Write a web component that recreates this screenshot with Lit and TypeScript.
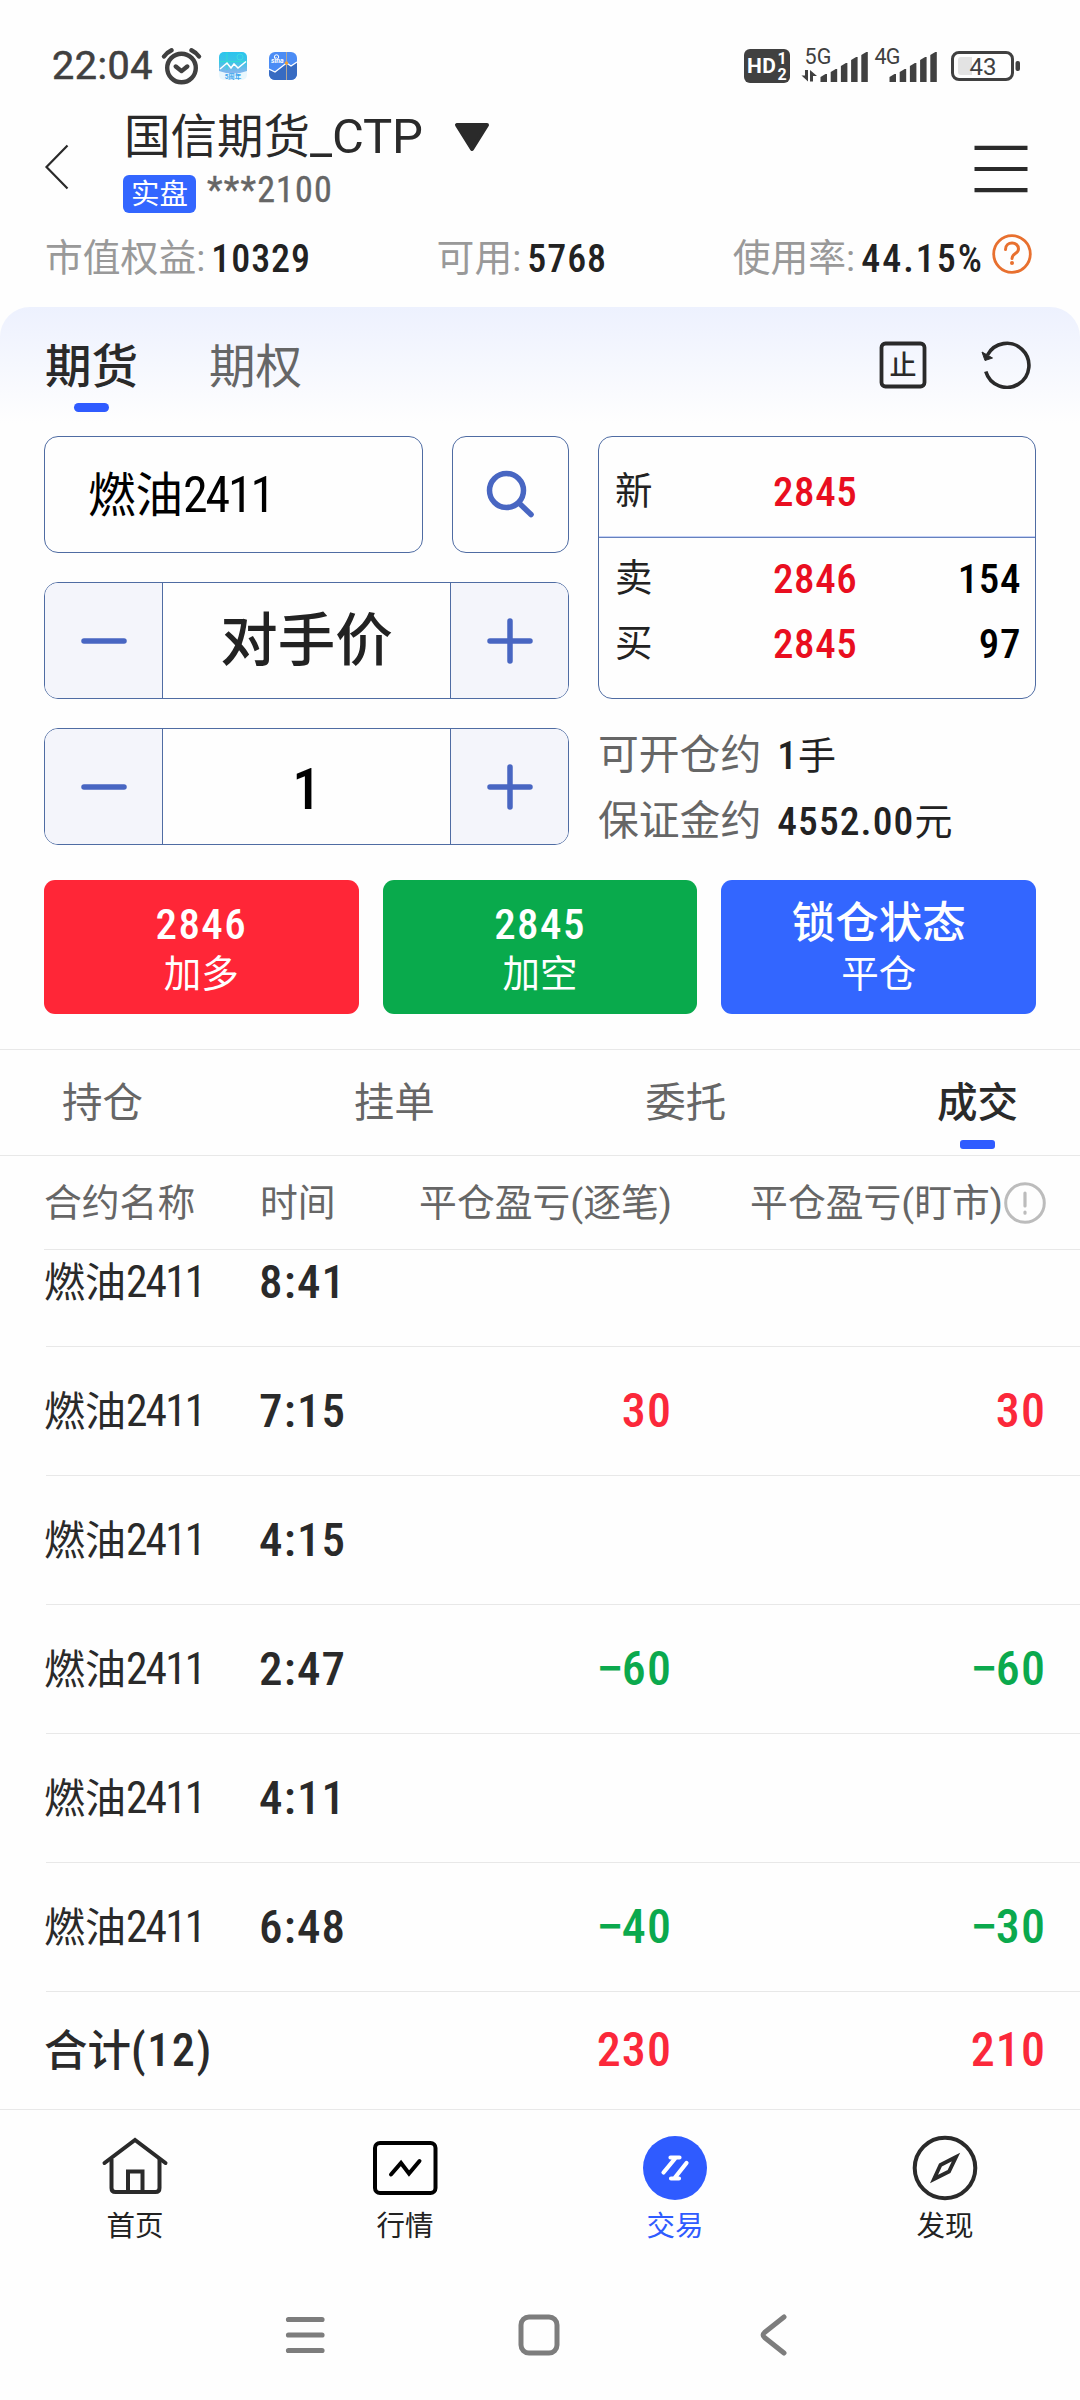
import { LitElement, html, svg, css, nothing } from "lit";
import { customElement, property } from "lit/decorators.js";
import { classMap } from "lit/directives/class-map.js";

interface Trade {
  name: string;
  code: string;
  time: string;
  byTrade?: number;
  byMarket?: number;
}

const TRADES: Trade[] = [
  { name: "燃油", code: "2411", time: "8:41" },
  { name: "燃油", code: "2411", time: "7:15", byTrade: 30, byMarket: 30 },
  { name: "燃油", code: "2411", time: "4:15" },
  { name: "燃油", code: "2411", time: "2:47", byTrade: -60, byMarket: -60 },
  { name: "燃油", code: "2411", time: "4:11" },
  { name: "燃油", code: "2411", time: "6:48", byTrade: -40, byMarket: -30 },
];

const base = css`
  * {
    box-sizing: border-box;
  }
  :host {
    display: block;
    font-family: Roboto, "Noto Sans CJK SC", sans-serif;
    font-weight: 400;
    white-space: nowrap;
    color: #2a2a2a;
  }
  svg {
    display: block;
    flex: none;
  }
  svg text {
    font-family: Roboto, "Noto Sans CJK SC", sans-serif;
  }
  .num {
    font-family: "Roboto Condensed", "Noto Sans CJK SC", sans-serif;
    font-weight: 500;
  }
`;

@customElement("status-bar")
export class StatusBar extends LitElement {
  static styles = [
    base,
    css`
      .bar {
        display: flex;
        align-items: center;
        justify-content: space-between;
        height: 100px;
        padding: 32px 59px 0 52px;
      }
      .side {
        display: flex;
        align-items: center;
      }
      .time {
        width: 108px;
        font-size: 39.5px;
        line-height: 48px;
        -webkit-text-stroke: 0.6px #404040;
        letter-spacing: 0.5px;
        color: #404040;
      }
      .alarm {
        margin-right: 17px;
      }
      .app {
        margin-right: 22px;
      }
    `,
  ];

  private bars(x: number) {
    return [8, 13, 19, 25, 30].map(
      (h, i) =>
        svg`<path fill="#404040" d=${`M${x + i * 10.2} ${34 - h + 3}l5 -3h1.5v${h}h-6.5z`} />`
    );
  }

  render() {
    return html`
      <div class="bar">
        <div class="side">
          <span class="time">22:04</span>
          <svg class="alarm" width="42" height="40" viewBox="0 0 42 40" fill="none" stroke="#404040" stroke-width="4.4" stroke-linecap="round" stroke-linejoin="round">
            <circle cx="21.5" cy="22" r="14.3" />
            <path d="M15.8 20.5l5.7 4.6 5.7-4.6M4 10.5q3-4 7.500-6.200M39 10.500q-3-4-7.500-6.200" />
          </svg>
          <svg class="app" width="28" height="28" viewBox="0 0 28 28">
            <defs>
              <linearGradient id="g" x1="0" y1="0" x2="0" y2="1">
                <stop offset="0" stop-color="#2bc4ee" />
                <stop offset=".5" stop-color="#3fc3e6" />
                <stop offset="1" stop-color="#8cb4ee" />
              </linearGradient>
            </defs>
            <rect width="28" height="28" rx="5" fill="#e9f7fd" />
            <path d="M0 19V5a5 5 0 0 1 5-5h18a5 5 0 0 1 5 5v14q-14 5-28 0z" fill="url(#g)" />
            <path d="M0 9.500h28M8 0v18" stroke="#2fe0cf" stroke-width=".8" />
            <circle cx="21" cy="5" r="3" fill="none" stroke="#3fe0e0" stroke-width=".8" />
            <path d="M1 17L8 11l4 5 3-4 4 4L27 9.500" fill="none" stroke="#fff" stroke-width="1.500" />
            <text x="14" y="26.500" font-size="6.500" font-weight="700" text-anchor="middle" fill="#3aa6ee">5周年</text>
          </svg>
          <svg width="28" height="28" viewBox="0 0 28 28">
            <rect width="28" height="28" rx="6" fill="#4b8cf5" />
            <path d="M0 18l6 2 11-8 5 2 6-4v12a6 6 0 0 1-6 6H6a6 6 0 0 1-6-6z" fill="#376bc2" />
            <path d="M17.500 0v28" stroke="#b0a69b" stroke-width="1" />
            <path d="M0 17l6 3 11.500-9 4.500 3 6-4" fill="none" stroke="#fff" stroke-width="1.300" />
            <circle cx="17.500" cy="11" r="1.700" fill="#f2a033" />
            <circle cx="7.500" cy="5" r="2.200" fill="none" stroke="#fff" />
            <text x="2" y="11" font-size="7" font-weight="700" font-style="italic" fill="#fff">sina</text>
          </svg>
        </div>
        <div class="side">
          <svg width="278" height="60" viewBox="743 36 278 60">
            <rect x="744" y="49" width="46" height="34" rx="6" fill="#404040" />
            <text x="747" y="73" font-size="21" font-weight="700" fill="#fff" textLength="29">HD</text>
            <text x="777.500" y="63.500" font-size="16" font-weight="700" fill="#fff">1</text>
            <text x="777.500" y="79.500" font-size="16" font-weight="700" fill="#fff">2</text>
            <text x="804.500" y="64" font-size="21.500" fill="#404040" textLength="27">5G</text>
            <text x="874.500" y="64" font-size="21.500" fill="#404040" textLength="26">4G</text>
            <path d="M801.500 75.500h3.500V70h3v11.500zM810 81.500V70l7 6h-4v5.500z" fill="#404040" />
            <g transform="translate(0 48)">${this.bars(820.5)}${this.bars(889.5)}</g>
            <rect x="952.500" y="52.500" width="60" height="27" rx="6.500" fill="none" stroke="#404040" stroke-width="3" />
            <path d="M972 57v18h-11q-3 0-3-3V60q0-3 3-3z" fill="#e3e3e3" />
            <text x="983" y="75" font-size="24" text-anchor="middle" fill="#404040">43</text>
            <rect x="1015.500" y="61" width="4.500" height="10" rx="2" fill="#404040" />
          </svg>
        </div>
      </div>
    `;
  }
}

@customElement("account-header")
export class AccountHeader extends LitElement {
  static styles = [
    base,
    css`
      .head {
        display: flex;
        align-items: center;
        height: 133px;
        padding: 0 52px 0 44px;
      }
      .back {
        margin-right: 53px;
      }
      .who {
        flex: 1;
        align-self: flex-start;
        display: grid;
        gap: 8px;
        padding-top: 7px;
      }
      .title {
        display: flex;
        align-items: center;
        gap: 31px;
        height: 60px;
        padding-left: 1px;
        font-size: 46.5px;
        line-height: 60px;
      }
      .latin {
        font-size: 49px;
        letter-spacing: -0.2px;
      }
      .sub {
        display: flex;
        align-items: center;
        gap: 11px;
        height: 38px;
      }
      .badge {
        height: 38px;
        padding: 0 8px;
        border-radius: 6px;
        background: #3366ff;
        color: #fff;
        font-size: 28.5px;
        line-height: 40px;
      }
      .acct {
        font-size: 36px;
        line-height: 36px;
        font-weight: 400;
        letter-spacing: 1.2px;
        color: #666;
        -webkit-text-stroke: 0.4px #666;
        margin-top: -9px;
      }
      .menu {
        margin-top: 5px;
      }
      .stats {
        display: flex;
        justify-content: space-between;
        align-items: center;
        height: 50px;
        padding: 0 48px 0 45px;
      }
      .stat {
        display: flex;
        align-items: center;
        font-size: 37.8px;
        line-height: 50px;
        color: #999;
      }
      .stat .num {
        margin-left: 6px;
        color: #222;
        font-size: 38px;
        letter-spacing: 0.9px;
        padding-top: 2px;
      }
      .stat .rate {
        letter-spacing: 2px;
      }
      .help {
        margin: -8px 0 0 8px;
      }
    `,
  ];

  render() {
    return html`
      <div class="head">
        <svg class="back" width="26" height="46" viewBox="0 0 26 46" fill="none" stroke="#2a2a2a" stroke-width="2.200">
          <path d="M23.500 1.500L2.500 23l21 21.500" />
        </svg>
        <div class="who">
          <div class="title">
            <span>国信期货<span class="latin">_CTP</span></span>
            <svg width="36" height="30" viewBox="0 0 36 30">
              <path d="M3 3h30L18 27z" fill="#2a2a2a" stroke="#2a2a2a" stroke-width="4" stroke-linejoin="round" />
            </svg>
          </div>
          <div class="sub">
            <span class="badge">实盘</span>
            <span class="acct num">***2100</span>
          </div>
        </div>
        <svg class="menu" width="54" height="48" viewBox="0 0 54 48" stroke="#2a2a2a" stroke-width="4.200">
          <path d="M.5 2.800h53M.5 24h53M.5 45.200h53" />
        </svg>
      </div>
      <div class="stats">
        <span class="stat">市值权益:<span class="num">10329</span></span>
        <span class="stat">可用:<span class="num">5768</span></span>
        <span class="stat">
          使用率:<span class="num rate">44.15%</span>
          <svg class="help" width="40" height="40" viewBox="0 0 40 40">
            <circle cx="20" cy="20" r="18.300" fill="none" stroke="#e8702f" stroke-width="2.800" />
            <path d="M13.500 15.500c0-8.500 13-8.500 13-.5 0 5-6.500 4.200-6.500 9.500" fill="none" stroke="#e8702f" stroke-width="3" stroke-linecap="round" />
            <circle cx="20" cy="29" r="2" fill="#e8702f" />
          </svg>
        </span>
      </div>
    `;
  }
}

@customElement("value-stepper")
export class ValueStepper extends LitElement {
  @property() value = "";

  static styles = [
    base,
    css`
      .stepper {
        display: grid;
        grid-template-columns: 117px 1fr 117px;
        height: 117px;
        border: 1px solid #4f6ca3;
        border-radius: 14px;
        overflow: hidden;
      }
      .cell {
        display: flex;
        align-items: center;
        justify-content: center;
        background: #f4f5fb;
      }
      .value {
        display: flex;
        align-items: center;
        justify-content: center;
        border: solid #4f6ca3;
        border-width: 0 1px;
        padding-top: 3px;
        font-size: 57.5px;
        line-height: 80px;
        font-weight: 500;
        color: #222;
      }
      .digits {
        color: #000;
        padding-top: 6px;
      }
    `,
  ];

  render() {
    const numeric = /^\d+$/.test(this.value);
    return html`
      <div class="stepper">
        <span class="cell">
          <svg width="46" height="46" viewBox="0 0 46 46" stroke="#4866c2" stroke-width="5.500" stroke-linecap="round">
            <path d="M3 23h40" />
          </svg>
        </span>
        <span class=${classMap({ value: true, num: numeric, digits: numeric })}>${this.value}</span>
        <span class="cell">
          <svg width="46" height="46" viewBox="0 0 46 46" stroke="#4866c2" stroke-width="5.500" stroke-linecap="round">
            <path d="M3 23h40M23 3v40" />
          </svg>
        </span>
      </div>
    `;
  }
}

@customElement("order-panel")
export class OrderPanel extends LitElement {
  static styles = [
    base,
    css`
      .panel {
        height: 742px;
        margin-top: 24px;
        border-radius: 30px 30px 0 0;
        background: linear-gradient(#edf1fe, #fefefe 116px);
      }
      .tabs {
        display: flex;
        height: 129px;
        padding: 30px 49px 0 45px;
      }
      .tab {
        display: flex;
        flex-direction: column;
        align-items: center;
        margin-right: 71px;
        font-size: 46.5px;
        line-height: 60px;
        color: #666;
      }
      .tab.on {
        font-weight: 500;
        color: #2a2a2a;
      }
      .tab.on::after {
        content: "";
        width: 35px;
        height: 9px;
        margin-top: 6px;
        border-radius: 5px;
        background: #2f5bff;
      }
      .tools {
        display: flex;
        gap: 54px;
        margin: 4px 0 0 auto;
      }
      .form {
        display: grid;
        grid-template-columns: 525px 438px;
        gap: 29px;
        padding: 0 44px;
      }
      .left,
      .right {
        display: flex;
        flex-direction: column;
        gap: 29px;
        height: 409px;
      }
      .search {
        display: grid;
        grid-template-columns: 379px 117px;
        gap: 29px;
        height: 117px;
      }
      .box {
        display: flex;
        align-items: center;
        border: 1px solid #4f6ca3;
        border-radius: 14px;
        background: #fefefe;
      }
      .name {
        padding: 1px 0 0 43px;
        font-size: 47.5px;
        line-height: 60px;
        color: #000;
      }
      .name .num {
        font-size: 50px;
        font-weight: 400;
        letter-spacing: -2.2px;
      }
      .find {
        justify-content: center;
      }
      .quote {
        flex: none;
        height: 263px;
        border: 1px solid #4f6ca3;
        border-radius: 14px;
        background: #fefefe;
        font-size: 37.5px;
        color: #222;
      }
      .line {
        display: grid;
        grid-template-columns: 158px 1fr 1fr;
        padding: 0 14px 0 16px;
        line-height: 65px;
        height: 65px;
      }
      .line.last {
        height: 101px;
        padding-top: 22px;
        margin-bottom: 8px;
        border-bottom: 1px solid #6681bd;
        box-shadow: inset 0 -1px #c3d0f6;
      }
      .line .num {
        font-size: 41px;
        letter-spacing: 0.6px;
        padding-top: 1px;
      }
      .price {
        color: #e90e20;
      }
      .vol {
        color: #000;
        text-align: right;
      }
      .info {
        font-size: 40.8px;
        line-height: 65px;
        color: #666;
        margin-top: -5px;
      }
      .info div {
        display: flex;
        gap: 16px;
      }
      .info b {
        font-size: 38px;
        font-weight: 400;
        color: #222;
      }
      .info .num {
        font-size: 39.5px;
        letter-spacing: 1.1px;
      }
      .actions {
        display: grid;
        grid-template-columns: repeat(3, 1fr);
        gap: 24px;
        padding: 35px 44px 0;
      }
      .btn {
        display: flex;
        flex-direction: column;
        align-items: center;
        height: 134px;
        padding-top: 19px;
        border-radius: 11px;
        color: #fff;
        font-size: 37.5px;
        line-height: 50px;
      }
      .btn .num {
        font-size: 43px;
        letter-spacing: 1.4px;
      }
      .btn .state {
        font-size: 43.5px;
        font-weight: 500;
      }
      .long {
        background: #ff2637;
      }
      .short {
        background: #09aa4c;
      }
      .close {
        background: #3366ff;
      }
    `,
  ];

  render() {
    return html`
      <div class="panel">
        <div class="tabs">
          <span class="tab on">期货</span>
          <span class="tab">期权</span>
          <span class="tools">
            <svg width="48" height="48" viewBox="0 0 48 48">
              <rect x="2.500" y="2.500" width="43" height="43" rx="4" fill="none" stroke="#2a2a2a" stroke-width="3.800" />
              <text x="24" y="34" font-size="27" font-weight="500" text-anchor="middle" fill="#2a2a2a">止</text>
            </svg>
            <svg width="50" height="48" viewBox="0 0 50 48">
              <path d="M4.800 30.500A22 22 0 1 0 6.500 14" fill="none" stroke="#2a2a2a" stroke-width="3.600" />
              <path d="M1 11l10.500 6L4 19.500z" fill="#2a2a2a" stroke="#2a2a2a" stroke-linejoin="round" />
            </svg>
          </span>
        </div>
        <div class="form">
          <div class="left">
            <div class="search">
              <div class="box name"><span>燃油<span class="num">2411</span></span></div>
              <div class="box find">
                <svg width="50" height="50" viewBox="0 0 50 50" fill="none" stroke="#4866c2" stroke-width="5.500" stroke-linecap="round">
                  <circle cx="20.500" cy="20.500" r="17" />
                  <path d="M33.500 33.500L45 44.500" />
                </svg>
              </div>
            </div>
            <value-stepper value="对手价"></value-stepper>
            <value-stepper value="1"></value-stepper>
          </div>
          <div class="right">
            <div class="quote">
              <div class="line last"><span>新</span><span class="num price">2845</span></div>
              <div class="line"><span>卖</span><span class="num price">2846</span><span class="num vol">154</span></div>
              <div class="line"><span>买</span><span class="num price">2845</span><span class="num vol">97</span></div>
            </div>
            <div class="info">
              <div>可开仓约<b><span class="num">1</span>手</b></div>
              <div>保证金约<b><span class="num">4552.00</span>元</b></div>
            </div>
          </div>
        </div>
        <div class="actions">
          <div class="btn long"><span class="num">2846</span><span>加多</span></div>
          <div class="btn short"><span class="num">2845</span><span>加空</span></div>
          <div class="btn close"><span class="state">锁仓状态</span><span>平仓</span></div>
        </div>
      </div>
    `;
  }
}

@customElement("trade-list")
export class TradeList extends LitElement {
  static styles = [
    base,
    css`
      .tabs {
        display: flex;
        justify-content: space-between;
        height: 107px;
        padding: 22px 62px 0 62px;
        border: solid #e8e8e8;
        border-width: 1px 0;
        font-size: 40.5px;
        line-height: 62px;
        color: #666;
      }
      .tab {
        display: flex;
        flex-direction: column;
        align-items: center;
      }
      .tab.on {
        font-weight: 500;
        color: #2a2a2a;
      }
      .tab.on::after {
        content: "";
        width: 35px;
        height: 9px;
        margin-top: 6px;
        border-radius: 3px;
        background: #2f5bff;
      }
      .grid {
        display: grid;
        margin-left: 44px;
        border-bottom: 1px solid #e8e8e8;
      }
      .head {
        grid-template-columns: 216px 157px 255px 372px;
        height: 94px;
        font-size: 37.8px;
        line-height: 94px;
        color: #666;
      }
      .r {
        text-align: right;
      }
      .head .wide {
        display: flex;
        justify-content: flex-end;
        align-items: center;
        margin-right: -3px;
      }
      .body {
        height: 859px;
        overflow: hidden;
      }
      .rows {
        margin-top: -32px;
      }
      .row {
        height: 129px;
        line-height: 128px;
        margin-left: 46px;
        grid-template-columns: 213px 179px 233px 374px;
      }
      .inst {
        padding-top: 1px;
        margin-left: -2px;
        font-size: 41px;
      }
      .inst .num {
        font-size: 43.5px;
        font-weight: 400;
        letter-spacing: -1.9px;
      }
      .time {
        font-size: 47px;
        letter-spacing: 1.2px;
      }
      .pl {
        font-size: 48px;
        letter-spacing: 1.1px;
        text-align: right;
        margin-right: -1px;
      }
      .minus {
        font-family: Roboto, sans-serif;
        font-weight: 500;
        letter-spacing: -1.5px;
      }
      .up {
        color: #fb283a;
      }
      .down {
        color: #0ba94d;
      }
      .total {
        height: 118px;
        line-height: 116px;
      }
      .sum {
        margin-left: -2px;
        font-size: 43.5px;
        font-weight: 500;
      }
      .sum span {
        font-size: 46px;
        letter-spacing: 1.6px;
      }
    `,
  ];

  private pl(v?: number) {
    if (v === undefined) return html`<span></span>`;
    return html`<span class=${classMap({ num: true, pl: true, up: v > 0, down: v < 0 })}
      >${v < 0 ? html`<span class="minus">−</span>` : nothing}${Math.abs(v)}</span
    >`;
  }

  render() {
    return html`
      <div class="tabs">
        ${["持仓", "挂单", "委托", "成交"].map(
          (t, i) => html`<span class=${classMap({ tab: true, on: i === 3 })}>${t}</span>`
        )}
      </div>
      <div class="grid head">
        <span>合约名称</span><span>时间</span><span class="r">平仓盈亏(逐笔)</span>
        <span class="wide"
          >平仓盈亏(盯市)<svg width="44" height="44" viewBox="0 0 44 44">
            <circle cx="22" cy="22" r="19.300" fill="none" stroke="#bcbcbc" stroke-width="3" />
            <path d="M22 12v13M22 31v1.200" stroke="#bcbcbc" stroke-width="3.200" stroke-linecap="round" /></svg
        ></span>
      </div>
      <div class="body">
        <div class="rows">
          ${TRADES.map(
            (t) => html`<div class="grid row">
              <span class="inst">${t.name}<span class="num">${t.code}</span></span>
              <span class="num time">${t.time}</span>
              ${this.pl(t.byTrade)}${this.pl(t.byMarket)}
            </div>`
          )}
        </div>
        <div class="grid row total">
          <span class="sum">合计<span class="num">(12)</span></span><span></span>
          ${this.pl(230)}${this.pl(210)}
        </div>
      </div>
    `;
  }
}

@customElement("bottom-nav")
export class BottomNav extends LitElement {
  static styles = [
    base,
    css`
      .nav {
        display: grid;
        grid-template-columns: repeat(4, 1fr);
        height: 160px;
        border-top: 1px solid #e8e8e8;
        padding-top: 24px;
      }
      .item {
        display: flex;
        flex-direction: column;
        align-items: center;
        font-size: 28.5px;
        line-height: 40px;
        gap: 3px;
        color: #222;
      }
      .item.on {
        color: #2f5bff;
      }
      .keys {
        display: flex;
        align-items: center;
        height: 131px;
        padding-left: 280px;
        gap: 184px;
      }
    `,
  ];

  private icons = [
    svg`<g fill="none" stroke="#2a2a2a" stroke-width="4"><path d="M4.500 29L35 6l30.500 23" stroke-linecap="round"/><path d="M11.500 25v29q0 4 4 4h40q4 0 4-4V25"/><path d="M28 58V37.500h14.500V58"/></g>`,
    svg`<g fill="none" stroke="#000" stroke-width="4"><rect x="5" y="9" width="60.500" height="50" rx="5"/><path d="M21 40.500l10-11.500 8 10.500L49.500 27" stroke-linecap="round"/></g>`,
    svg`<circle cx="35" cy="34" r="32" fill="#2f5bff"/><path d="M23.500 38.500L35.500 24M30.500 23.500h9M46.500 29L35 43.500M31 44.500h8" fill="none" stroke="#fff" stroke-width="4.200" stroke-linecap="round"/>`,
    svg`<g fill="none" stroke="#2a2a2a"><circle cx="35" cy="34" r="30.300" stroke-width="4"/><path d="M46 23L30.500 31 24 45 39 37.500z" stroke-width="3.800"/></g>`,
  ];

  render() {
    return html`
      <div class="nav">
        ${["首页", "行情", "交易", "发现"].map(
          (t, i) => html`<span class=${classMap({ item: true, on: i === 2 })}>
            <svg width="70" height="70" viewBox="0 0 70 70">${this.icons[i]}</svg>${t}
          </span>`
        )}
      </div>
      <div class="keys">
        <svg width="50" height="50" viewBox="0 0 50 50" stroke="#7d7d7d" stroke-width="5.200" stroke-linecap="round">
          <path d="M8.500 9.500h33.500M8.500 25h33.500M8.500 40.500h33.500" />
        </svg>
        <svg width="50" height="50" viewBox="0 0 50 50" fill="none" stroke="#7d7d7d" stroke-width="5">
          <rect x="7" y="7" width="36" height="36" rx="8" />
        </svg>
        <svg width="50" height="50" viewBox="0 0 50 50" fill="none" stroke="#7d7d7d" stroke-width="5" stroke-linecap="round" stroke-linejoin="round">
          <path d="M36 7L16.500 22.500q-2.800 2.500 0 5L36 43" />
        </svg>
      </div>
    `;
  }
}

@customElement("app-root")
export class AppRoot extends LitElement {
  static styles = css`
    :host {
      display: block;
      width: 1080px;
      height: 2400px;
      overflow: hidden;
      background: #fefefe;
    }
  `;

  render() {
    return html`
      <status-bar></status-bar>
      <account-header></account-header>
      <order-panel></order-panel>
      <trade-list></trade-list>
      <bottom-nav></bottom-nav>
    `;
  }
}
